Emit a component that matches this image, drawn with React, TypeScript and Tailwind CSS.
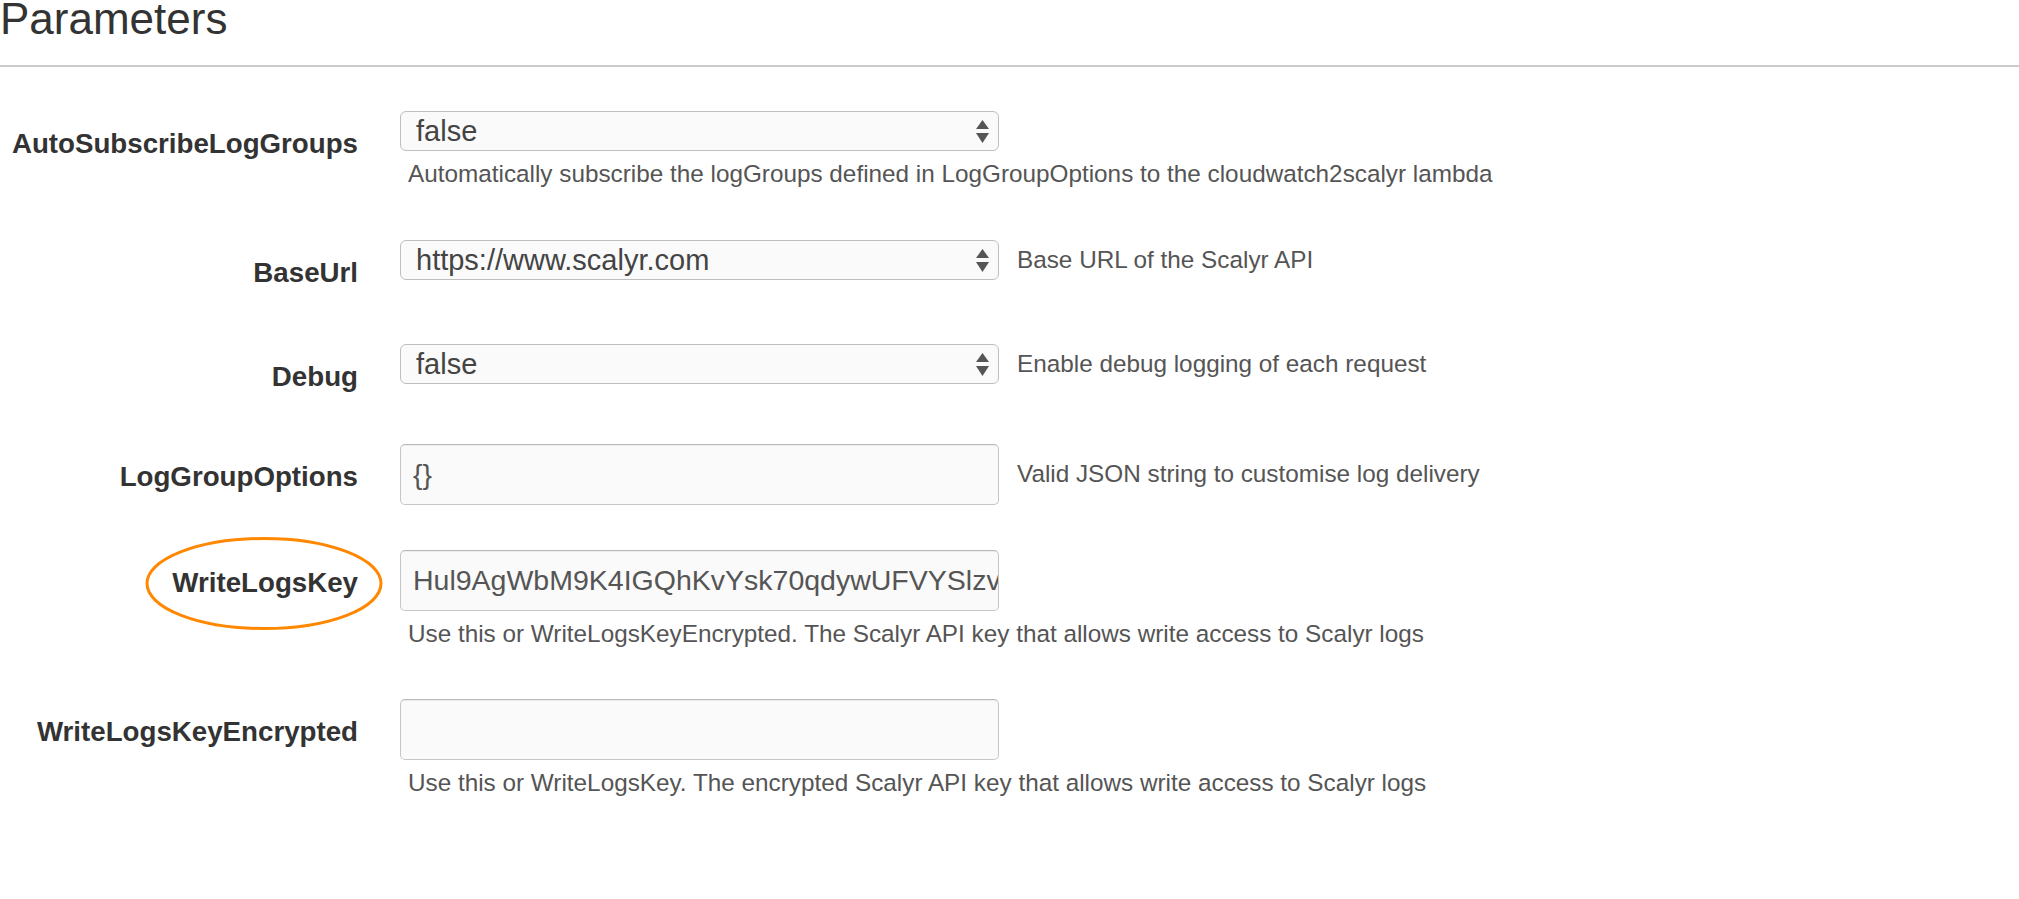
import React from "react";

const font = { fontFamily: '"Liberation Sans", Arial, Helvetica, sans-serif' };

function Arrows() {
  return (
    <svg width="13" height="23" viewBox="0 0 13 23" className="absolute right-[9px] top-[8px]">
      <polygon points="6.5,0 13,9 0,9" fill="#555" />
      <polygon points="0,13 13,13 6.5,23" fill="#555" />
    </svg>
  );
}

function SelectBox({ value }: { value: string }) {
  return (
    <div className="relative h-[40px] w-[599px] rounded-[6px] border border-[#bfbfbf] bg-[#fafafa] pl-[15px] text-[29px] leading-[38px] text-[#444]">
      {value}
      <Arrows />
    </div>
  );
}

function TextBox({ value }: { value: string }) {
  return (
    <div className="h-[61px] w-[599px] overflow-hidden whitespace-nowrap rounded-[5px] border border-[#c6c6c6] border-t-[#b8b8b8] bg-[#fafafa] pl-[12px] pr-[4px] text-[28.5px] leading-[59px] text-[#555] shadow-[inset_0_1px_1px_rgba(0,0,0,0.06)]">
      {value}
    </div>
  );
}

function Label({ text }: { text: string }) {
  return (
    <div className="flex h-[61px] w-[358px] shrink-0 items-center justify-end pt-[5px] text-[27.7px] font-bold text-[#333]">
      {text}
    </div>
  );
}

function Help({ text, below }: { text: string; below?: boolean }) {
  if (below) {
    return <div className="mt-[8px] pl-[8px] text-[24.3px] leading-[30px] text-[#555]">{text}</div>;
  }
  return <div className="ml-[18px] flex h-[40px] items-center text-[24.3px] text-[#555]">{text}</div>;
}

export default function App() {
  return (
    <div className="min-h-screen w-full bg-white" style={font}>
      <h1 className="h-[38px] text-[44px] font-normal leading-[38px] text-[#333]">Parameters</h1>
      <div className="mt-[27px] h-[2px] w-full bg-[#cbcbcb]" />

      {/* AutoSubscribeLogGroups */}
      <div className="mt-[44px] flex items-start">
        <Label text="AutoSubscribeLogGroups" />
        <div className="ml-[42px]">
          <SelectBox value="false" />
          <Help below text="Automatically subscribe the logGroups defined in LogGroupOptions to the cloudwatch2scalyr lambda" />
        </div>
      </div>

      {/* BaseUrl */}
      <div className="mt-[51px] flex items-start">
        <Label text="BaseUrl" />
        <div className="ml-[42px]">
          <SelectBox value="https://www.scalyr.com" />
        </div>
        <Help text="Base URL of the Scalyr API" />
      </div>

      {/* Debug */}
      <div className="mt-[43px] flex items-start">
        <Label text="Debug" />
        <div className="ml-[42px]">
          <SelectBox value="false" />
        </div>
        <Help text="Enable debug logging of each request" />
      </div>

      {/* LogGroupOptions */}
      <div className="mt-[39px] flex items-center">
        <Label text="LogGroupOptions" />
        <div className="ml-[42px]">
          <TextBox value="{}" />
        </div>
        <div className="ml-[18px] text-[24.3px] text-[#555]">Valid JSON string to customise log delivery</div>
      </div>

      {/* WriteLogsKey */}
      <div className="relative mt-[45px] flex items-start">
        <svg
          width="240"
          height="95"
          viewBox="0 0 240 95"
          className="absolute left-[144px] top-[-14px]"
        >
          <ellipse cx="120" cy="47.5" rx="117" ry="45" fill="none" stroke="#ff8800" strokeWidth="3" />
        </svg>
        <Label text="WriteLogsKey" />
        <div className="ml-[42px]">
          <TextBox value="Hul9AgWbM9K4IGQhKvYsk70qdywUFVYSlzvBqXw7TnRkPfe" />
          <Help below text="Use this or WriteLogsKeyEncrypted. The Scalyr API key that allows write access to Scalyr logs" />
        </div>
      </div>

      {/* WriteLogsKeyEncrypted */}
      <div className="mt-[50px] flex items-start">
        <Label text="WriteLogsKeyEncrypted" />
        <div className="ml-[42px]">
          <TextBox value="" />
          <Help below text="Use this or WriteLogsKey. The encrypted Scalyr API key that allows write access to Scalyr logs" />
        </div>
      </div>
    </div>
  );
}
